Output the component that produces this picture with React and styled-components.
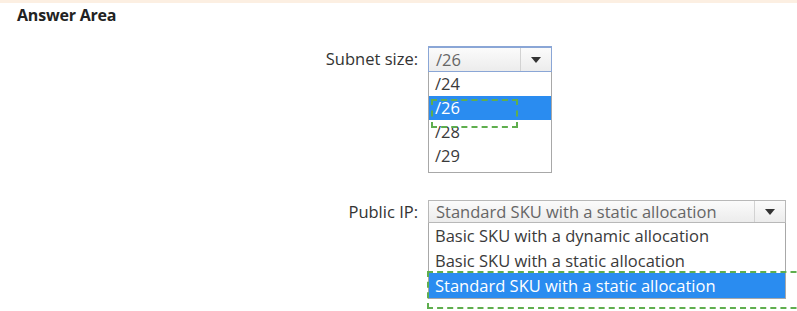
import React from 'react'
import styled, { createGlobalStyle } from 'styled-components'

const Global = createGlobalStyle`
  html, body {
    margin: 0;
    padding: 0;
    background: #ffffff;
    overflow: hidden;
  }
  body {
    font-family: "Open Sans", "Noto Sans", sans-serif;
  }
`

const Page = styled.div`
  width: 797px;
  height: 311px;
  display: flex;
  flex-direction: column;
  position: relative;
  overflow: hidden;
`

const TopStrip = styled.div`
  height: 3px;
  background: #fcefe2;
`

const Title = styled.div`
  font-weight: 700;
  font-size: 16px;
  line-height: 18px;
  color: #222;
  padding: 3px 0 0 17px;
  letter-spacing: -0.2px;
`

const Form = styled.div`
  display: flex;
  flex-direction: column;
  gap: 27px;
  padding-top: 22px;
`

const Field = styled.div`
  display: grid;
  grid-template-columns: 418px auto;
  column-gap: 10px;
  align-items: start;
`

const Label = styled.div`
  text-align: right;
  font-size: 16.5px;
  line-height: ${p => p.$h}px;
  color: #333;
`

const Dropdown = styled.div`
  position: relative;
  width: ${p => p.$w}px;
  display: flex;
  flex-direction: column;
`

const Select = styled.div`
  height: ${p => p.$h}px;
  box-sizing: border-box;
  display: flex;
  border: 1px solid ${p => (p.$focused ? '#8aa6d6' : '#b8b8b8')};
  border-top-width: ${p => (p.$focused ? 2 : 1)}px;
  background: linear-gradient(#fbfbfb, #ececec);
`

const Value = styled.div`
  flex: 1;
  padding-left: 7px;
  font-size: 16.5px;
  line-height: ${p => p.$h}px;
  color: #666;
  white-space: nowrap;
  overflow: hidden;
`

const ArrowCell = styled.div`
  width: 30px;
  border-left: 1px solid #d2d2d2;
  display: flex;
  align-items: center;
  justify-content: center;
`

const Arrow = styled.div`
  width: 0;
  height: 0;
  border-left: 5px solid transparent;
  border-right: 5px solid transparent;
  border-top: 6px solid #333;
`

const List = styled.div`
  display: flex;
  flex-direction: column;
  border: 1px solid #a8a8a8;
  border-top: none;
  background: #fff;
  padding-bottom: ${p => p.$pad}px;
`

const Item = styled.div`
  height: ${p => p.$h}px;
  line-height: ${p => p.$h}px;
  padding-left: 6px;
  font-size: 16.5px;
  white-space: nowrap;
  color: ${p => (p.$active ? '#ffffff' : '#3a3a3a')};
  background: ${p => (p.$active ? '#2a8cf0' : 'transparent')};
`

const Marker = styled.div`
  position: absolute;
  left: ${p => p.$x}px;
  top: ${p => p.$y}px;
  width: ${p => p.$w}px;
  height: ${p => p.$h}px;
  border: 2px dashed #5fae4e;
  box-sizing: border-box;
  pointer-events: none;
`

const Chooser = ({ label, width, height, itemHeight, value, options, active, focused, pad, marker }) => (
  <Field>
    <Label $h={height}>{label}</Label>
    <Dropdown $w={width}>
      <Select $h={height} $focused={focused}>
        <Value $h={height - 2}>{value}</Value>
        <ArrowCell>
          <Arrow />
        </ArrowCell>
      </Select>
      <List $pad={pad}>
        {options.map(o => (
          <Item key={o} $h={itemHeight} $active={o === active}>
            {o}
          </Item>
        ))}
      </List>
      {marker && <Marker $x={marker.x} $y={marker.y} $w={marker.w} $h={marker.h} />}
    </Dropdown>
  </Field>
)

export default function App() {
  return (
    <Page>
      <Global />
      <TopStrip />
      <Title>Answer Area</Title>
      <Form>
        <Chooser
          label="Subnet size:"
          width={124}
          height={26}
          itemHeight={24}
          value="/26"
          options={['/24', '/26', '/28', '/29']}
          active="/26"
          focused
          pad={4}
          marker={{ x: 3, y: 53, w: 87, h: 29 }}
        />
        <Chooser
          label="Public IP:"
          width={358}
          height={23}
          itemHeight={25}
          value="Standard SKU with a static allocation"
          options={[
            'Basic SKU with a dynamic allocation',
            'Basic SKU with a static allocation',
            'Standard SKU with a static allocation',
          ]}
          active="Standard SKU with a static allocation"
          pad={0}
          marker={{ x: -1, y: 71, w: 420, h: 38 }}
        />
      </Form>
    </Page>
  )
}
